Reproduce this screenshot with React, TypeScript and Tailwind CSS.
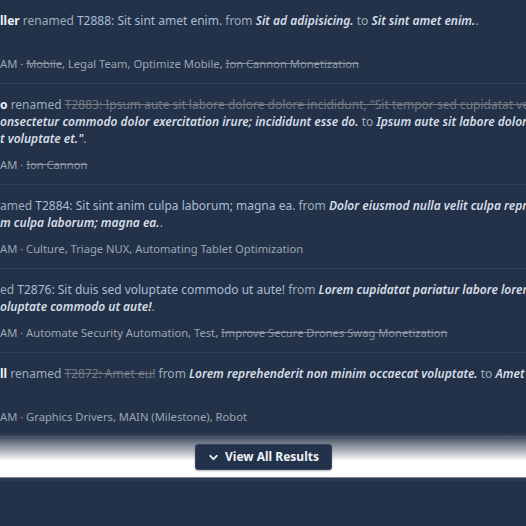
import { ChevronDown } from 'lucide-react';

type Kind = 'name' | 'text' | 'link' | 'gone' | 'quote';
type Seg = [Kind, string];

const segClass: Record<Kind, string> = {
    name: 'font-bold text-[#eef1f5]',
    text: 'text-[#9eabbd]',
    link: 'text-[#aabdd8]',
    gone: 'text-[#757a84] line-through',
    quote: 'italic font-semibold text-[#d6dde7]',
};

const feed: { lines: Seg[][]; meta: Seg[] }[] = [
    {
        lines: [
            [['name', 'ller'], ['text', ' renamed '], ['link', 'T2888: Sit sint amet enim.'], ['text', ' from '], ['quote', 'Sit ad adipisicing.'], ['text', ' to '], ['quote', 'Sit sint amet enim.'], ['text', '.']],
        ],
        meta: [['text', 'AM · '], ['gone', 'Mobile'], ['text', ', Legal Team, Optimize Mobile, '], ['gone', 'Ion Cannon Monetization']],
    },
    {
        lines: [
            [['name', 'o'], ['text', ' renamed '], ['gone', 'T2883: Ipsum aute sit labore dolore dolore incididunt, "Sit tempor sed cupidatat velit voluptate et."']],
            [['quote', 'onsectetur commodo dolor exercitation irure; incididunt esse do.'], ['text', ' to '], ['quote', 'Ipsum aute sit labore dolore dolore incididunt, "Sit tempor sed cupidatat']],
            [['quote', 't voluptate et."'], ['text', '.']],
        ],
        meta: [['text', 'AM · '], ['gone', 'Ion Cannon']],
    },
    {
        lines: [
            [['text', 'amed '], ['link', 'T2884: Sit sint anim culpa laborum; magna ea.'], ['text', ' from '], ['quote', 'Dolor eiusmod nulla velit culpa reprehenderit']],
            [['quote', 'm culpa laborum; magna ea.'], ['text', '.']],
        ],
        meta: [['text', 'AM · Culture, Triage NUX, Automating Tablet Optimization']],
    },
    {
        lines: [
            [['text', 'ed '], ['link', 'T2876: Sit duis sed voluptate commodo ut aute!'], ['text', ' from '], ['quote', 'Lorem cupidatat pariatur labore lorem ipsum']],
            [['quote', 'oluptate commodo ut aute!'], ['text', '.']],
        ],
        meta: [['text', 'AM · Automate Security Automation, Test, '], ['gone', 'Improve Secure Drones Swag Monetization']],
    },
    {
        lines: [
            [['name', 'll'], ['text', ' renamed '], ['gone', 'T2872: Amet eu!'], ['text', ' from '], ['quote', 'Lorem reprehenderit non minim occaecat voluptate.'], ['text', ' to '], ['quote', 'Amet eu!'], ['text', '.']],
        ],
        meta: [['text', 'AM · Graphics Drivers, MAIN (Milestone), Robot']],
    },
];

export default function App() {
    return (
        <div className="w-[526px] h-[526px] overflow-hidden bg-[#233248] font-['Noto_Sans',sans-serif]">
            {feed.map((item, i) => (
                <div key={i} className="border-b border-[#2d3e56] pt-[12px] pb-[11px]">
                    <div className="min-h-[34px] text-[12px] leading-[17px]">
                        {item.lines.map((line, j) => (
                            <div key={j} className="whitespace-nowrap">
                                {line.map(([kind, text], k) => (
                                    <span key={k} className={segClass[kind]}>{text}</span>
                                ))}
                            </div>
                        ))}
                    </div>
                    <div className="mt-[10px] whitespace-nowrap text-[11.2px] leading-[16px] text-[#9ba6b5]">
                        {item.meta.map(([kind, text], k) => (
                            <span key={k} className={kind === 'gone' ? 'line-through text-[#8a94a2]' : ''}>{text}</span>
                        ))}
                    </div>
                </div>
            ))}

            {/* fade over the list with the "more" button */}
            <div className="-mt-[4px] h-[44px] pt-[11px] bg-[linear-gradient(to_bottom,rgba(35,50,72,0),#ffffff_28px)]">
                <button className="mx-auto flex h-[26px] w-[137px] items-center justify-center gap-[5px] rounded-[3px] border border-[#34465f] bg-[#22324a] text-[12px] font-bold text-[#eef1f5] shadow-[0_1px_2px_rgba(0,0,0,0.3)]">
                    <ChevronDown size={13} strokeWidth={3.5} />
                    View All Results
                </button>
            </div>
            <div className="border-t border-[#7d8797]" />
            <div className="h-[3px] bg-[#2c3c53]" />
        </div>
    );
}
